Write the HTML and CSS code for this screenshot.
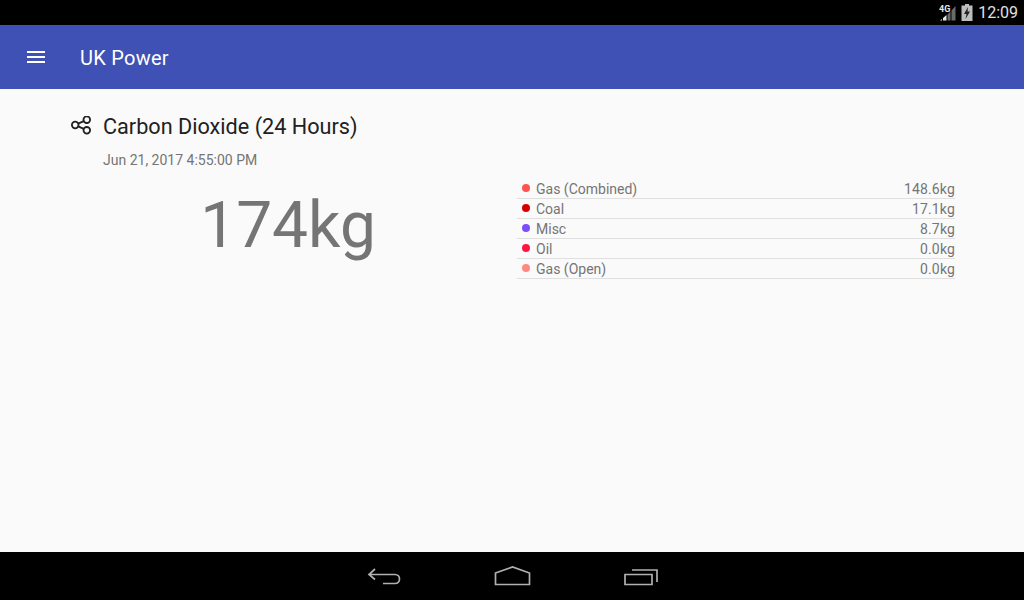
FILE: index.html
```html
<!DOCTYPE html>
<html lang="en">
<head>
<meta charset="utf-8">
<title>UK Power</title>
<link rel="stylesheet" href="styles.css">
</head>
<body>
<div class="screen">
  <div class="status-bar">
    <svg class="net" width="18" height="18" viewBox="0 0 18 18">
      <text x="0" y="8" class="net-label">4G</text>
      <path d="M1 16.500h2V15l-2 1.500zM4 16.500h3.500V11L4 14z" fill="#e8e8e8"/>
      <path d="M8.500 16.500h3V7.500l-3 3zM12.500 16.500h4V2l-4 4.500z" fill="#6a6a6a"/>
    </svg>
    <svg class="batt" width="12" height="17" viewBox="0 0 12 17">
      <path d="M4 0h4v1.500h3.500V17H.5V1.500H4z" fill="#bdbdbd"/>
      <path d="M7 3 3 10h2.500L4.500 15 9 7.500H6.500z" fill="#222"/>
    </svg>
    <span class="clock">12:09</span>
  </div>
  <header class="app-bar">
    <svg class="menu" width="18" height="12" viewBox="0 0 18 12">
      <path d="M0 0h18v2H0zM0 5h18v2H0zM0 10h18v2H0z" fill="#fff"/>
    </svg>
    <h1 class="app-title">UK Power</h1>
  </header>
  <main class="content">
    <div class="title-row">
      <svg class="share" width="22" height="22" viewBox="0 0 22 22" fill="none" stroke="#212121" stroke-width="1.800">
        <circle cx="16.800" cy="3.700" r="3.300"/>
        <circle cx="5.200" cy="9" r="3.300"/>
        <circle cx="16.800" cy="14.300" r="3.300"/>
        <path d="M8.200 7.600 13.800 5.100M8.200 10.400 13.800 12.900"/>
      </svg>
      <h2 class="card-title">Carbon Dioxide (24 Hours)</h2>
    </div>
    <p class="timestamp">Jun 21, 2017 4:55:00 PM</p>
    <div class="columns">
      <div class="total">174kg</div>
      <ul class="legend">
        <li class="legend-row"><span class="dot dot-gas"></span><span class="name">Gas (Combined)</span><span class="value">148.6kg</span></li>
        <li class="legend-row"><span class="dot dot-coal"></span><span class="name">Coal</span><span class="value">17.1kg</span></li>
        <li class="legend-row"><span class="dot dot-misc"></span><span class="name">Misc</span><span class="value">8.7kg</span></li>
        <li class="legend-row"><span class="dot dot-oil"></span><span class="name">Oil</span><span class="value">0.0kg</span></li>
        <li class="legend-row"><span class="dot dot-open"></span><span class="name">Gas (Open)</span><span class="value">0.0kg</span></li>
      </ul>
    </div>
  </main>
  <nav class="nav-bar">
    <svg width="34" height="20" viewBox="0 0 34 20" fill="none" stroke="#b0b0b0" stroke-width="1.700">
      <path d="M8 3 2 8.500l6 5M2 8.500h26c6 0 6 9 0 9H16"/>
    </svg>
    <svg width="37" height="20" viewBox="0 0 37 20" fill="none" stroke="#b0b0b0" stroke-width="1.700">
      <path d="M1.500 7 18.500 1l17 6v11.500h-34z"/>
    </svg>
    <svg width="34" height="20" viewBox="0 0 34 20" fill="none" stroke="#b0b0b0" stroke-width="1.700">
      <path d="M1 8.500h27v10H1zM8 4h25v12"/>
    </svg>
  </nav>
</div>
</body>
</html>
```
FILE: styles.css
```css
* { box-sizing: border-box; }
html, body { margin: 0; padding: 0; }
body { font-family: Roboto, "Liberation Sans", sans-serif; }
.screen { width: 1024px; height: 600px; display: flex; flex-direction: column; background: #fafafa; overflow: hidden; }
.status-bar { height: 25px; flex: none; background: #000; display: flex; align-items: center; justify-content: flex-end; padding-right: 6px; }
.net { margin-right: 4px; }
.net-label { font: bold 9px "Roboto", sans-serif; fill: #e8e8e8; }
.batt { margin-right: 5px; }
.clock { color: #e0e0e0; font-size: 16px; line-height: 25px; }
.app-bar { height: 64px; flex: none; background: #3f51b5; display: flex; align-items: center; padding-left: 27px; }
.menu { margin-right: 35px; }
.app-title { margin: 0; color: #fff; font-size: 20px; font-weight: 400; letter-spacing: 0.25px; position: relative; top: 1px; }
.content { flex: 1; padding: 0 69px 0 70px; }
.title-row { display: flex; align-items: center; height: 28px; margin-top: 24px; }
.share { margin-right: 11px; flex: none; }
.card-title { margin: 0; color: #212121; font-size: 21.65px; font-weight: 400; line-height: 28px; }
.timestamp { margin: 9px 0 0 33px; color: #757575; font-size: 14px; line-height: 20px; }
.columns { display: flex; }
.total { width: 438px; text-align: center; color: #757575; font-size: 64px; line-height: 80px; margin: 16px -2px 0 -1px; }
.legend { list-style: none; margin: 9px 0 0 12px; padding: 0; width: 438px; }
.legend-row { display: flex; align-items: center; height: 20px; border-bottom: 1px solid #e0e0e0; color: #757575; font-size: 14px; }
.dot { width: 8px; height: 8px; border-radius: 50%; margin: 0 6px 2px 5px; flex: none; }
.dot-gas { background: #ff5252; }
.dot-coal { background: #d50000; }
.dot-misc { background: #7c4dff; }
.dot-oil { background: #ff1744; }
.dot-open { background: #ff8a80; }
.name { flex: 1; }
.value { letter-spacing: 0.15px; }
.nav-bar { height: 48px; flex: none; background: #000; display: flex; align-items: center; justify-content: center; gap: 93px; padding-left: 1px; }
```
